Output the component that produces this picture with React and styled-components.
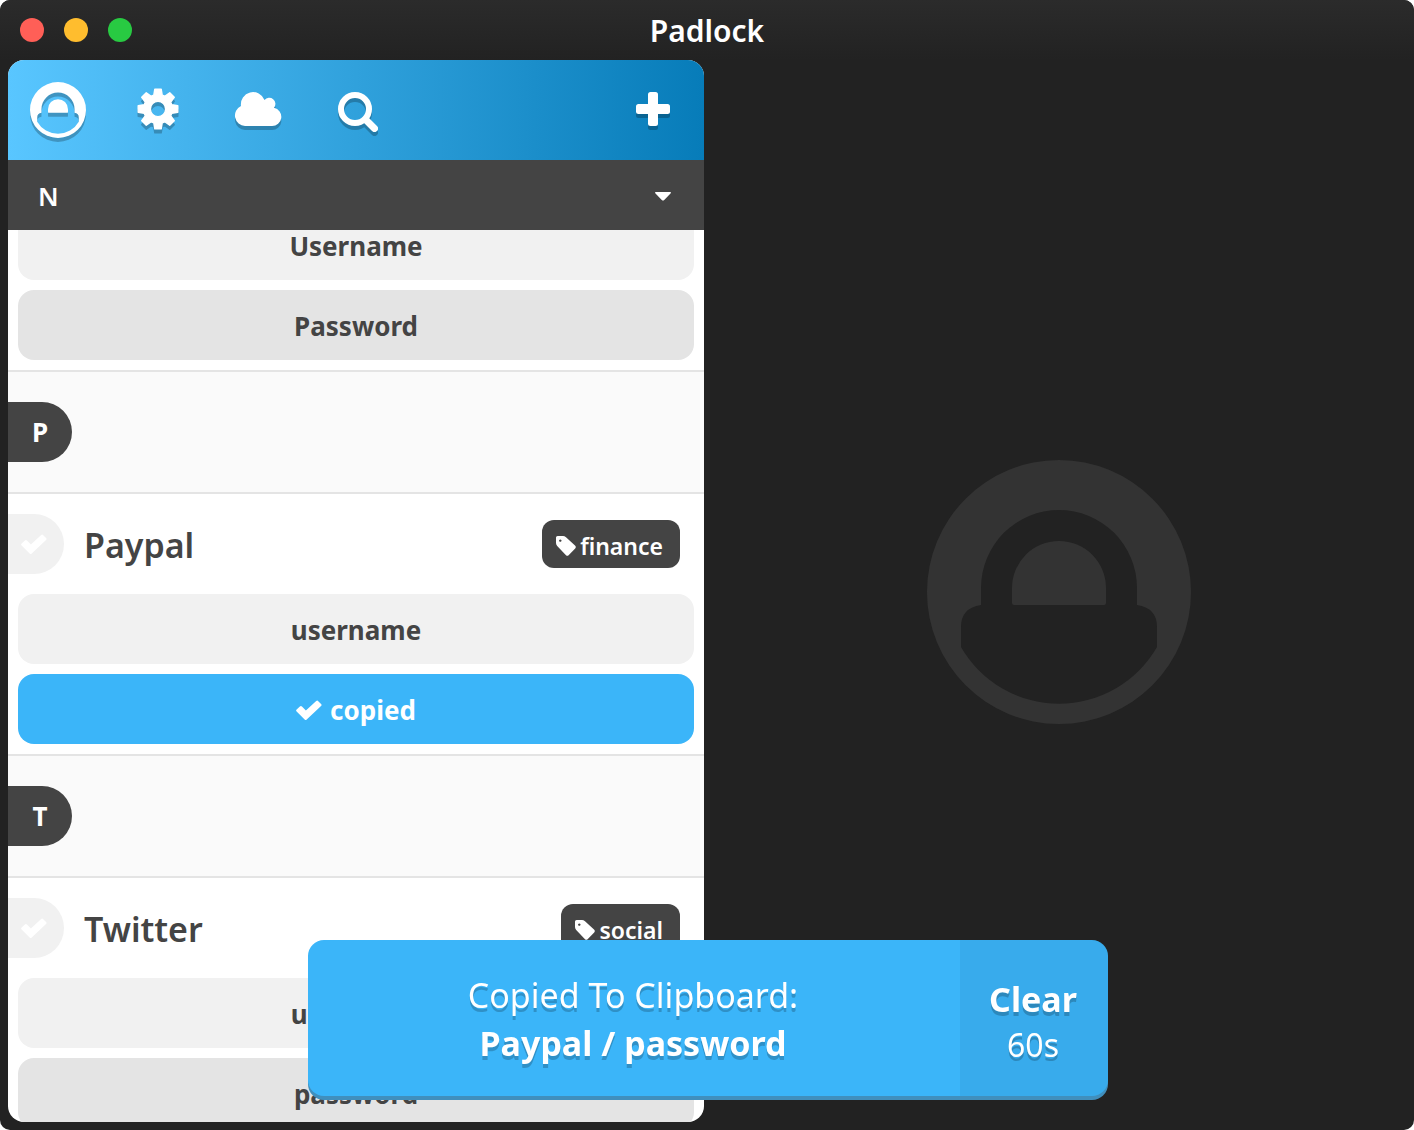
import React, { useLayoutEffect, useRef } from "react";
import styled, { createGlobalStyle } from "styled-components";

const color = {
  window: "#222222",
  dark: "#444444",
  blue: "#3bb5f9",
  line: "#e4e4e4",
};

const GlobalStyle = createGlobalStyle`
  *, *::before, *::after { box-sizing: border-box; }
  body {
    margin: 0;
    background: #ffffff;
    color: ${color.dark};
    font-family: "Noto Sans", "Open Sans", sans-serif;
    font-size: 26px;
    font-weight: 600;
  }
  button, select, input {
    margin: 0;
    padding: 0;
    border: 0;
    background: none;
    color: inherit;
    font: inherit;
    cursor: pointer;
  }
  h1, h2, p { margin: 0; }
  svg { display: block; }
`;

const Window = styled.div`
  display: flex;
  flex-direction: column;
  height: 100vh;
  border-radius: 10px;
  overflow: hidden;
  background: ${color.window};
`;

const TitleBar = styled.header`
  display: grid;
  grid-template-columns: 1fr auto 1fr;
  align-items: center;
  flex: none;
  height: 60px;
  padding: 0 20px;
  background: linear-gradient(#2b2b2b, ${color.window});
`;

const WindowControls = styled.div`
  display: flex;
  gap: 20px;
`;

const WindowControl = styled.button`
  width: 24px;
  height: 24px;
  border-radius: 50%;
  background: ${(p) => p.$fill};
`;

const WindowTitle = styled.h1`
  color: #ffffff;
  font-size: 30px;
  font-weight: 600;
`;

const Panes = styled.div`
  display: flex;
  flex: 1;
  min-height: 0;
  padding-left: 8px;
`;

const ListPane = styled.main`
  display: flex;
  flex-direction: column;
  flex: none;
  width: calc(50% - 7px);
  margin-bottom: 8px;
  border-radius: 16px;
  overflow: hidden;
  background: #ffffff;
`;

const EmptyPane = styled.aside`
  display: flex;
  flex: 1;
  align-items: center;
  justify-content: center;
  padding-bottom: 6px;
  color: #333333;
`;

const Toolbar = styled.nav`
  display: flex;
  flex: none;
  height: 100px;
  padding-right: 1px;
  color: #ffffff;
  background: linear-gradient(90deg, #59c6ff, #077cb9);
`;

const ToolButton = styled.button`
  display: flex;
  align-items: center;
  justify-content: center;
  width: 100px;
  padding-bottom: ${(p) => (p.$logo ? "0" : "2px")};

  &:last-child { margin-left: auto; }

  svg { filter: drop-shadow(0 4px 0 rgba(0, 0, 0, 0.23)); overflow: visible; }
`;

const SectionPicker = styled.div`
  display: grid;
  align-items: center;
  flex: none;
  height: 70px;
  color: #ffffff;
  background: ${color.dark};

  > * { grid-area: 1 / 1; }
  > svg { justify-self: end; margin: 2px 32px 0 0; pointer-events: none; }
`;

const SectionSelect = styled.select`
  appearance: none;
  width: 100%;
  height: 100%;
  padding: 2px 30px 0;

  option { color: ${color.dark}; }
`;

const Records = styled.div`
  flex: 1;
  min-height: 0;
  overflow-y: auto;
  scrollbar-width: none;
`;

const SectionHeader = styled.h2`
  display: flex;
  align-items: center;
  height: 124px;
  border: solid ${color.line};
  border-width: 2px 0;
  background: #fafafa;
`;

const SectionLetter = styled.span`
  display: grid;
  place-items: center;
  width: 64px;
  height: 60px;
  border-radius: 0 30px 30px 0;
  color: #ffffff;
  background: ${color.dark};
  font-size: 26px;
  font-weight: 700;
`;

const RecordHeader = styled.div`
  display: flex;
  align-items: center;
  height: 100px;
  padding-right: 24px;
`;

const SelectMark = styled.label`
  display: grid;
  place-items: center;
  width: 56px;
  height: 60px;
  padding-right: 4px;
  border-radius: 0 30px 30px 0;
  color: #ffffff;
  background: #f1f1f1;

  > * { grid-area: 1 / 1; }
`;

const SelectInput = styled.input`
  appearance: none;
  width: 100%;
  height: 100%;
`;

const RecordName = styled.h2`
  flex: 1;
  padding: 2px 0 0 20px;
  font-size: 34px;
  font-weight: 600;
`;

const Tag = styled.span`
  display: flex;
  align-items: center;
  gap: 4px;
  height: 48px;
  padding: 3px 17px 0 14px;
  border-radius: 12px;
  color: #ffffff;
  background: ${color.dark};
  font-size: 23px;
`;

const Fields = styled.div`
  display: flex;
  flex-direction: column;
  gap: 10px;
  padding: 0 10px 10px;
`;

const fieldFill = { light: "#f1f1f1", shaded: "#e4e4e4", copied: color.blue };

const FieldButton = styled.button`
  display: flex;
  align-items: center;
  justify-content: center;
  gap: 8px;
  height: 70px;
  padding-top: 2px;
  border-radius: 16px;
  color: ${(p) => (p.$tone === "copied" ? "#ffffff" : color.dark)};
  background: ${(p) => fieldFill[p.$tone]};
  font-weight: 700;
`;

const ToastLayer = styled.div`
  position: fixed;
  inset: auto 6px 34px 8px;
  display: flex;
  justify-content: center;
  pointer-events: none;
`;

const Toast = styled.div`
  display: flex;
  width: 800px;
  height: 156px;
  border-radius: 16px;
  color: #ffffff;
  background: ${color.blue};
  box-shadow: 0 4px 0 #408fbd;
  font-size: 34px;
  text-align: center;
  text-shadow: 0 4px 0 rgba(0, 0, 0, 0.2);
  pointer-events: auto;
`;

const ToastMessage = styled.div`
  display: flex;
  flex: 1;
  flex-direction: column;
  justify-content: center;
  padding: 2px 2px 0 0;
  line-height: 48px;
`;

const ToastLabel = styled.p`
  font-weight: 400;
`;

const ToastItem = styled.p`
  font-weight: 700;
`;

const ClearButton = styled.button`
  display: flex;
  flex-direction: column;
  align-items: center;
  justify-content: center;
  width: 148px;
  padding: 8px 2px 0 0;
  border-radius: 0 16px 16px 0;
  background: rgba(0, 0, 0, 0.05);
  font-weight: 700;
  line-height: 46px;
  text-shadow: inherit;
`;

const Countdown = styled.span`
  font-size: 32px;
  font-weight: 400;
`;

const Logo = ({ size }) => (
  <svg width={size} height={size} viewBox="0 0 264 264" fill="currentColor" aria-hidden="true">
    <path
      fillRule="evenodd"
      d="M132 0a132 132 0 1 1 0 264a132 132 0 1 1 0-264Z
         M54 128a78 78 0 0 1 156 0v17q20 3 20 22v20a113 113 0 0 1-196 0v-20q0-19 20-22Z
         M85 128v15q0 2 2 2h90q2 0 2-2v-15a47 47 0 0 0-94 0Z"
    />
  </svg>
);

const gearPath = (() => {
  const points = [];
  for (let i = 0; i < 8; i += 1) {
    const a = (i * Math.PI) / 4;
    [[13.8, -4.2], [19.8, -3.2], [19.8, 3.2], [13.8, 4.2]].forEach(([r, w]) => {
      const x = 21 + r * Math.cos(a) - w * Math.sin(a);
      const y = 21 + r * Math.sin(a) + w * Math.cos(a);
      points.push(`${x.toFixed(2)} ${y.toFixed(2)}`);
    });
  }
  return `M${points.join("L")}Z M28.6 21a7.6 7.6 0 1 0-15.2 0a7.6 7.6 0 1 0 15.2 0Z`;
})();

const GearIcon = () => (
  <svg width="42" height="42" viewBox="0 0 42 42" fill="currentColor" aria-hidden="true">
    <path fillRule="evenodd" stroke="currentColor" strokeWidth="1.4" strokeLinejoin="round" d={gearPath} />
  </svg>
);

const CloudIcon = () => (
  <svg width="46" height="34" viewBox="0 0 46 34" fill="currentColor" aria-hidden="true">
    <path d="M10 34A10.5 10.5 0 0 1 6 14A12.2 12.2 0 0 1 29.500 8A5.800 5.800 0 0 1 39 15.800A9.200 9.200 0 0 1 36.800 34Z" />
  </svg>
);

const SearchIcon = () => (
  <svg width="40" height="34" viewBox="0 0 40 34" fill="none" stroke="currentColor" aria-hidden="true">
    <circle cx="17" cy="17" r="14" strokeWidth="6" />
    <path d="M28 28L36.500 36.500" strokeWidth="7" strokeLinecap="round" />
  </svg>
);

const PlusIcon = () => (
  <svg width="34" height="34" viewBox="0 0 34 34" fill="currentColor" aria-hidden="true">
    <rect x="12" width="10" height="34" rx="2.500" />
    <rect y="12" width="34" height="10" rx="2.500" />
  </svg>
);

const CaretIcon = () => (
  <svg width="18" height="10" viewBox="0 0 18 10" fill="currentColor" aria-hidden="true">
    <path d="M1.500 1H16.500Q17.500 1.500 16.500 2.500L10 9.200Q9 10 8 9.200L1.500 2.500Q.5 1.500 1.500 1Z" />
  </svg>
);

const CheckIcon = () => (
  <svg width="26" height="20" viewBox="0 0 26 20" fill="currentColor" aria-hidden="true">
    <path
      stroke="currentColor"
      strokeWidth="3"
      strokeLinejoin="round"
      d="M1.700 10.500L4.900 7.500L9.800 12.500L21.200 2.200L24 5L9.700 18.500Z"
    />
  </svg>
);

const TagIcon = () => (
  <svg width="20" height="20" viewBox="0 0 20 20" fill="currentColor" aria-hidden="true">
    <path
      fillRule="evenodd"
      d="M1.600 0H7Q8.500 0 10 1.200L19 9.500Q20.500 11 19.200 12.400L12.600 19.200Q11.400 20.400 10 19.200L1.200 10Q0 8.500 0 7V1.600Q0 0 1.600 0Z
         M4.300 3.400a1.200 1.200 0 1 0 .01 0Z"
    />
  </svg>
);

function Field({ tone, children }) {
  return (
    <FieldButton type="button" $tone={tone}>
      {tone === "copied" && <CheckIcon />}
      {children}
    </FieldButton>
  );
}

function Section({ letter }) {
  return (
    <SectionHeader>
      <SectionLetter>{letter}</SectionLetter>
    </SectionHeader>
  );
}

function RecordTop({ name, tag }) {
  return (
    <RecordHeader>
      <SelectMark>
        <SelectInput type="checkbox" aria-label={name} />
        <CheckIcon />
      </SelectMark>
      <RecordName>{name}</RecordName>
      <Tag>
        <TagIcon />
        {tag}
      </Tag>
    </RecordHeader>
  );
}

export default function App() {
  const records = useRef(null);

  // Open with the list scrolled a little way into its first record.
  useLayoutEffect(() => {
    records.current.scrollTop = 20;
  }, []);

  return (
    <>
      <GlobalStyle />
      <Window>
        <TitleBar>
          <WindowControls>
            <WindowControl type="button" aria-label="Close" $fill="#ff5f57" />
            <WindowControl type="button" aria-label="Minimize" $fill="#ffbd2e" />
            <WindowControl type="button" aria-label="Zoom" $fill="#28ca42" />
          </WindowControls>
          <WindowTitle>Padlock</WindowTitle>
        </TitleBar>
        <Panes>
          <ListPane>
            <Toolbar>
              <ToolButton type="button" aria-label="Menu" $logo>
                <Logo size={56} />
              </ToolButton>
              <ToolButton type="button" aria-label="Settings">
                <GearIcon />
              </ToolButton>
              <ToolButton type="button" aria-label="Sync">
                <CloudIcon />
              </ToolButton>
              <ToolButton type="button" aria-label="Search">
                <SearchIcon />
              </ToolButton>
              <ToolButton type="button" aria-label="Add record">
                <PlusIcon />
              </ToolButton>
            </Toolbar>
            <SectionPicker>
              <SectionSelect aria-label="Section" defaultValue="N">
                <option>N</option>
                <option>P</option>
                <option>T</option>
              </SectionSelect>
              <CaretIcon />
            </SectionPicker>
            <Records ref={records}>
              <Fields>
                <Field tone="light">Username</Field>
                <Field tone="shaded">Password</Field>
              </Fields>
              <Section letter="P" />
              <RecordTop name="Paypal" tag="finance" />
              <Fields>
                <Field tone="light">username</Field>
                <Field tone="copied">copied</Field>
              </Fields>
              <Section letter="T" />
              <RecordTop name="Twitter" tag="social" />
              <Fields>
                <Field tone="light">username</Field>
                <Field tone="shaded">password</Field>
              </Fields>
            </Records>
          </ListPane>
          <EmptyPane>
            <Logo size={264} />
          </EmptyPane>
        </Panes>
      </Window>
      <ToastLayer>
        <Toast role="status">
          <ToastMessage>
            <ToastLabel>Copied To Clipboard:</ToastLabel>
            <ToastItem>Paypal / password</ToastItem>
          </ToastMessage>
          <ClearButton type="button">
            Clear
            <Countdown>60s</Countdown>
          </ClearButton>
        </Toast>
      </ToastLayer>
    </>
  );
}
